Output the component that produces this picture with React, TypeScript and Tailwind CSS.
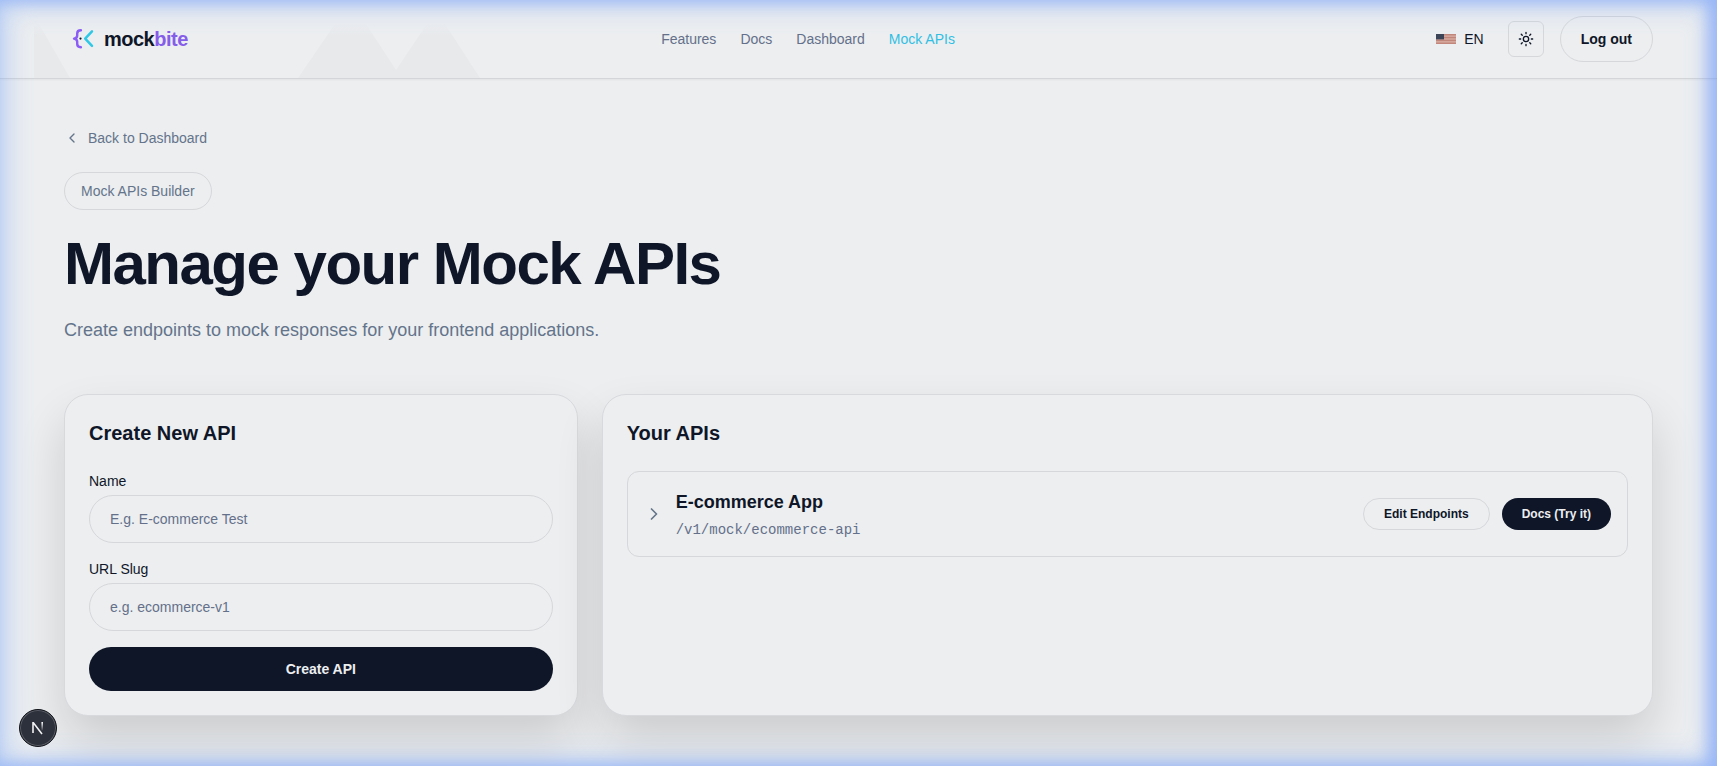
import type { ReactNode } from "react";
import { ChevronLeft, ChevronRight } from "lucide-react";

const navItems = [
  { label: "Features", active: false },
  { label: "Docs", active: false },
  { label: "Dashboard", active: false },
  { label: "Mock APIs", active: true },
];

const apis = [{ id: 1, name: "E-commerce App", path: "/v1/mock/ecommerce-api" }];

const Logo = () => (
  <a href="#" className="flex items-center gap-2 pl-2">
    <svg width="24" height="24" viewBox="0 0 24 24" fill="none" strokeLinecap="round" strokeLinejoin="round">
      <path d="M8.9 3.2Q5.2 3.2 5.2 6.4V8.6Q5.2 11.2 2 11.6Q5.2 12 5.2 14.8V17Q5.2 20.2 8.9 20.2" stroke="#8b5cf6" strokeWidth="2.4" />
      <circle cx="8.5" cy="11.6" r="1.1" fill="#0f172a" />
      <path d="M20 4.4L13.2 11.6L20 18.8" stroke="#2fc8e6" strokeWidth="2.5" />
    </svg>
    <span className="text-xl leading-7 font-bold tracking-tight">
      mock<span className="text-[#865de9]">bite</span>
    </span>
  </a>
);

const Flag = () => (
  <svg width="20" height="10" viewBox="0 0 20 10">
    <rect width="20" height="10" fill="#e0bcb2" />
    {[0, 1.54, 3.08, 4.62, 6.16, 7.7, 9.24].map((y) => (
      <rect key={y} y={y} width="20" height="0.77" fill="#b8766b" />
    ))}
    <rect width="8" height="5.4" fill="#3c4458" />
  </svg>
);

const SunIcon = () => (
  <svg width="16" height="16" viewBox="0 0 24 24" fill="none" stroke="currentColor" strokeWidth="2" strokeLinecap="round">
    <circle cx="12" cy="12" r="4" />
    <path d="M12 2v2M12 20v2M4.93 4.93l1.41 1.41M17.66 17.66l1.41 1.41M2 12h2M20 12h2M6.34 17.66l-1.41 1.41M19.07 4.93l-1.41 1.41" />
  </svg>
);

const Header = () => (
  <header className="relative h-[79px] border-b border-[#d3d5d8] shadow-[0_1px_2px_rgba(0,0,0,0.05)]">
    {/* Faint peaks behind the bar */}
    <svg className="absolute top-0 left-0" width="500" height="78" viewBox="0 0 500 78">
      <defs>
        <linearGradient id="peaks" x1="0" y1="22" x2="0" y2="36" gradientUnits="userSpaceOnUse">
          <stop stopColor="#e8e9eb" stopOpacity="0" />
          <stop offset="1" stopColor="#e8e9eb" />
        </linearGradient>
      </defs>
      <g fill="url(#peaks)">
        <path d="M34 24H39L70 78H34Z" />
        <path d="M298 78L335 24H366L396 70L427 24H445L480 78Z" />
      </g>
    </svg>
    <div className="relative flex h-full items-center justify-between px-16">
      <Logo />
      <nav className="flex items-center gap-6 text-sm">
        {navItems.map((item) => (
          <a key={item.label} href="#" className={item.active ? "text-[#32bfe3]" : "text-[#64708a]"}>
            {item.label}
          </a>
        ))}
      </nav>
      <div className="flex items-center gap-4">
        <button className="flex items-center gap-2 px-2 text-sm">
          <Flag />
          EN
        </button>
        <button title="Theme" className="flex size-9 items-center justify-center rounded-md border border-[#d5d7da]">
          <SunIcon />
        </button>
        <button className="h-[46px] rounded-full border border-[#d5d7da] px-5 text-sm font-bold">Log out</button>
      </div>
    </div>
  </header>
);

const Card = ({ title, className, children }: { title: string; className?: string; children: ReactNode }) => (
  <section
    className={`rounded-3xl border border-[#d7d9dc] bg-[#eceef0] p-6 shadow-[0_24px_48px_rgba(0,0,0,0.14)] ${className ?? ""}`}
  >
    <h2 className="mb-6 text-xl leading-7 font-bold">{title}</h2>
    {children}
  </section>
);

const Field = ({ label, placeholder }: { label: string; placeholder: string }) => (
  <label className="mb-4 block">
    <span className="mb-1 block text-sm">{label}</span>
    <input
      type="text"
      placeholder={placeholder}
      className="block h-12 w-full rounded-3xl border border-[#d5d7da] px-5 text-sm placeholder:text-[#64708a]"
    />
  </label>
);

const ApiRow = ({ name, path }: { name: string; path: string }) => (
  <div className="flex items-center justify-between rounded-xl border border-[#d5d7da] p-4">
    <div className="flex items-center gap-3">
      <ChevronRight className="size-5 text-[#64748b]" />
      <div>
        <h3 className="text-lg leading-7 font-bold">{name}</h3>
        <p className="mt-1 font-['Liberation_Mono',monospace] text-sm text-[#64708a]">{path}</p>
      </div>
    </div>
    <div className="flex gap-3 text-xs font-bold">
      <button className="h-8 rounded-full border border-[#d5d7da] px-5">Edit Endpoints</button>
      <button className="h-8 rounded-full bg-[#0f1628] px-5 text-[#eceef0]">Docs (Try it)</button>
    </div>
  </div>
);

const DevBadge = () => (
  <div className="fixed bottom-[19px] left-[19px] flex size-[38px] items-center justify-center rounded-full border border-[#11131a] bg-[#2d313b] ring-1 ring-[#5b5e66] ring-inset">
    <svg width="16" height="16" viewBox="0 0 16 16" fill="none" strokeWidth="1.6">
      <defs>
        <linearGradient id="stem" x1="0" y1="2" x2="0" y2="11" gradientUnits="userSpaceOnUse">
          <stop stopColor="#fff" />
          <stop offset="1" stopColor="#fff" stopOpacity="0" />
        </linearGradient>
      </defs>
      <path d="M3 13V2.8H3.4L12 14" stroke="#f1f2f4" />
      <path d="M12.2 2V10.6" stroke="url(#stem)" />
    </svg>
  </div>
);

export default function App() {
  return (
    <div className="relative h-[766px] overflow-hidden bg-[#eceef0] font-['Liberation_Sans',Arial,sans-serif] text-[#0f1628]">
      <Header />
      <main className="px-16 pt-[49px]">
        <a href="#" className="flex w-fit items-center gap-2 text-sm text-[#64748b]">
          <ChevronLeft className="size-4" />
          Back to Dashboard
        </a>
        <div className="mt-6 w-fit rounded-full border border-[#d5d7da] px-4 py-2 text-sm text-[#64748b]">
          Mock APIs Builder
        </div>
        <h1 className="mt-6 text-6xl leading-none font-bold tracking-tight">Manage your Mock APIs</h1>
        <p className="mt-[22px] text-lg leading-7 text-[#64748b]">
          Create endpoints to mock responses for your frontend applications.
        </p>

        <div className="mt-[50px] grid grid-cols-3 gap-6">
          <Card title="Create New API">
            <Field label="Name" placeholder="E.g. E-commerce Test" />
            <Field label="URL Slug" placeholder="e.g. ecommerce-v1" />
            <button className="h-11 w-full rounded-full bg-[#0f1628] text-sm font-bold text-[#eceef0]">Create API</button>
          </Card>
          <Card title="Your APIs" className="col-span-2">
            {apis.map((api) => (
              <ApiRow key={api.id} name={api.name} path={api.path} />
            ))}
          </Card>
        </div>
      </main>

      {/* Blue glow around the window edges, heavier on the right */}
      <div className="pointer-events-none absolute inset-0 shadow-[inset_0_0_26px_6px_rgba(120,168,250,0.42),inset_-8px_0_14px_2px_rgba(96,140,250,0.44)]" />
      <DevBadge />
    </div>
  );
}
